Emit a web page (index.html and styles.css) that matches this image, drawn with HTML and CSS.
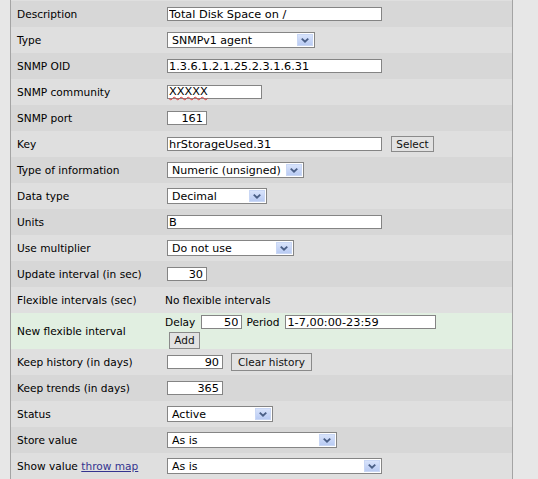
FILE: index.html
```html
<!DOCTYPE html>
<html>
<head>
<meta charset="utf-8">
<link rel="stylesheet" href="styles.css">
</head>
<body>
<div class="form">
  <div class="row dark"><div class="lbl">Description</div><div class="val"><input class="inp w215" type="text" value="Total Disk Space on /"></div></div>
  <div class="row light"><div class="lbl">Type</div><div class="val">
    <div class="sel w148"><span class="sel-text">SNMPv1 agent</span><span class="sel-btn"><svg width="15" height="12" viewBox="0 0 15 12"><path d="M4 4.5 L7.5 7.8 L11 4.5" fill="none" stroke="#4a5f86" stroke-width="2"/></svg></span></div>
  </div></div>
  <div class="row dark"><div class="lbl">SNMP OID</div><div class="val"><input class="inp w215" type="text" value="1.3.6.1.2.1.25.2.3.1.6.31"></div></div>
  <div class="row light"><div class="lbl">SNMP community</div><div class="val"><div class="inp w95 fake"><span class="spell">XXXXX</span></div></div></div>
  <div class="row dark"><div class="lbl">SNMP port</div><div class="val"><input class="inp w40 num" type="text" value="161"></div></div>
  <div class="row light"><div class="lbl">Key</div><div class="val"><input class="inp w215" type="text" value="hrStorageUsed.31"><button class="btn btn-select">Select</button></div></div>
  <div class="row dark"><div class="lbl">Type of information</div><div class="val">
    <div class="sel w137"><span class="sel-text">Numeric (unsigned)</span><span class="sel-btn"><svg width="15" height="12" viewBox="0 0 15 12"><path d="M4 4.5 L7.5 7.8 L11 4.5" fill="none" stroke="#4a5f86" stroke-width="2"/></svg></span></div>
  </div></div>
  <div class="row light"><div class="lbl">Data type</div><div class="val">
    <div class="sel w100"><span class="sel-text">Decimal</span><span class="sel-btn"><svg width="15" height="12" viewBox="0 0 15 12"><path d="M4 4.5 L7.5 7.8 L11 4.5" fill="none" stroke="#4a5f86" stroke-width="2"/></svg></span></div>
  </div></div>
  <div class="row dark"><div class="lbl">Units</div><div class="val"><input class="inp w215" type="text" value="B"></div></div>
  <div class="row light"><div class="lbl">Use multiplier</div><div class="val">
    <div class="sel w127"><span class="sel-text">Do not use</span><span class="sel-btn"><svg width="15" height="12" viewBox="0 0 15 12"><path d="M4 4.5 L7.5 7.8 L11 4.5" fill="none" stroke="#4a5f86" stroke-width="2"/></svg></span></div>
  </div></div>
  <div class="row dark"><div class="lbl">Update interval (in sec)</div><div class="val"><input class="inp w40 num" type="text" value="30"></div></div>
  <div class="row light"><div class="lbl">Flexible intervals (sec)</div><div class="val"><span class="plain">No flexible intervals</span></div></div>
  <div class="row new"><div class="lbl">New flexible interval</div><div class="val val-stack">
    <div class="flex-line"><span class="plain">Delay</span><input class="inp w41 num m-delay" type="text" value="50"><span class="plain m-period">Period</span><input class="inp w151 m-pin" type="text" value="1-7,00:00-23:59"></div>
    <div class="flex-line"><button class="btn btn-add">Add</button></div>
  </div></div>
  <div class="row light"><div class="lbl">Keep history (in days)</div><div class="val"><input class="inp w56 num" type="text" value="90"><button class="btn btn-clear">Clear history</button></div></div>
  <div class="row dark"><div class="lbl">Keep trends (in days)</div><div class="val"><input class="inp w56 num" type="text" value="365"></div></div>
  <div class="row light"><div class="lbl">Status</div><div class="val">
    <div class="sel w106"><span class="sel-text">Active</span><span class="sel-btn"><svg width="15" height="12" viewBox="0 0 15 12"><path d="M4 4.5 L7.5 7.8 L11 4.5" fill="none" stroke="#4a5f86" stroke-width="2"/></svg></span></div>
  </div></div>
  <div class="row dark"><div class="lbl">Store value</div><div class="val">
    <div class="sel w170"><span class="sel-text">As is</span><span class="sel-btn"><svg width="15" height="12" viewBox="0 0 15 12"><path d="M4 4.5 L7.5 7.8 L11 4.5" fill="none" stroke="#4a5f86" stroke-width="2"/></svg></span></div>
  </div></div>
  <div class="row light"><div class="lbl">Show value <a class="link" href="#">throw map</a></div><div class="val">
    <div class="sel w215"><span class="sel-text">As is</span><span class="sel-btn"><svg width="15" height="12" viewBox="0 0 15 12"><path d="M4 4.5 L7.5 7.8 L11 4.5" fill="none" stroke="#4a5f86" stroke-width="2"/></svg></span></div>
  </div></div>
</div>
</body>
</html>
```
FILE: styles.css
```css
html, body {
  margin: 0;
  padding: 0;
}
body {
  width: 538px;
  height: 479px;
  overflow: hidden;
  background: #e7e7e7;
  font-family: "DejaVu Sans", Verdana, sans-serif;
  font-size: 10.6px;
  color: #000;
}
.form {
  margin-left: 10px;
  width: 501px;
  border-left: 1px solid #a4a4a4;
  border-right: 1px solid #a4a4a4;
  padding-top: 1px;
  background: #dfdfdf;
}
.row {
  display: grid;
  grid-template-columns: 153px 1fr;
  align-items: center;
  height: 26px;
}
.row.dark { background: #d7d7d7; }
.row.light { background: #dfdfdf; }
.row.new { background: #e1efe1; height: 36px; }
.lbl {
  padding-left: 6px;
  white-space: nowrap;
}
.val {
  display: flex;
  align-items: center;
  white-space: nowrap;
}
.val-stack {
  flex-direction: column;
  align-items: flex-start;
  justify-content: flex-start;
  align-self: stretch;
  padding-top: 2px;
  gap: 3px;
}
.flex-line {
  display: flex;
  align-items: center;
  height: 14px;
}
.flex-line + .flex-line { height: 17px; }
.plain { padding-left: 1px; }
.inp {
  box-sizing: border-box;
  height: 14px;
  margin: 0 0 0 3px;
  padding: 0 1px;
  border: 1px solid #848484;
  background: #fff;
  font-family: "DejaVu Sans", Verdana, sans-serif;
  font-size: 11.3px;
  line-height: 12px;
  color: #000;
  outline: none;
}
.inp.fake { display: flex; align-items: center; }
.inp.num { text-align: right; padding-right: 3px; }
.spell {
  text-decoration: underline wavy #e23b3b;
  text-decoration-thickness: 1px;
  text-underline-offset: 1px;
  line-height: 12px;
}
.w40 { width: 40px; }
.w41 { width: 41px; }
.w56 { width: 56px; }
.w95 { width: 95px; }
.w100 { width: 100px; }
.w106 { width: 106px; }
.w127 { width: 127px; }
.w137 { width: 137px; }
.w148 { width: 148px; }
.w151 { width: 151px; }
.w170 { width: 170px; }
.w215 { width: 215px; }
.m-delay { margin-left: 6px; }
.m-period { margin-left: 3px; }
.m-pin { margin-left: 6px; }
.sel {
  box-sizing: border-box;
  height: 16px;
  margin-left: 3px;
  border: 1px solid #858585;
  background: #fff;
  display: flex;
  align-items: center;
  justify-content: space-between;
  font-size: 11px;
}
.sel-text { padding-left: 4px; }
.sel-btn {
  box-sizing: border-box;
  width: 16px;
  height: 12px;
  margin-right: 1px;
  border: 1px solid #c9d7f5;
  background: linear-gradient(#d8e3fb, #b9cbf3);
  display: flex;
  align-items: center;
  justify-content: center;
}
.sel-btn svg { display: block; }
.btn {
  box-sizing: border-box;
  height: 16px;
  padding: 0 5px;
  border: 1px solid #8a8a8a;
  background: #e2e2e2;
  font-family: "DejaVu Sans", Verdana, sans-serif;
  font-size: 10.5px;
  color: #111;
  line-height: 13px;
}
.btn-select { width: 43px; margin-left: 9px; padding: 0; }
.btn-add { width: 31px; height: 17px; margin-left: 5px; padding: 0; }
.btn-clear { width: 81px; height: 18px; margin-left: 8px; padding: 0; }
.link {
  color: #34348f;
  text-decoration: underline;
}
```
